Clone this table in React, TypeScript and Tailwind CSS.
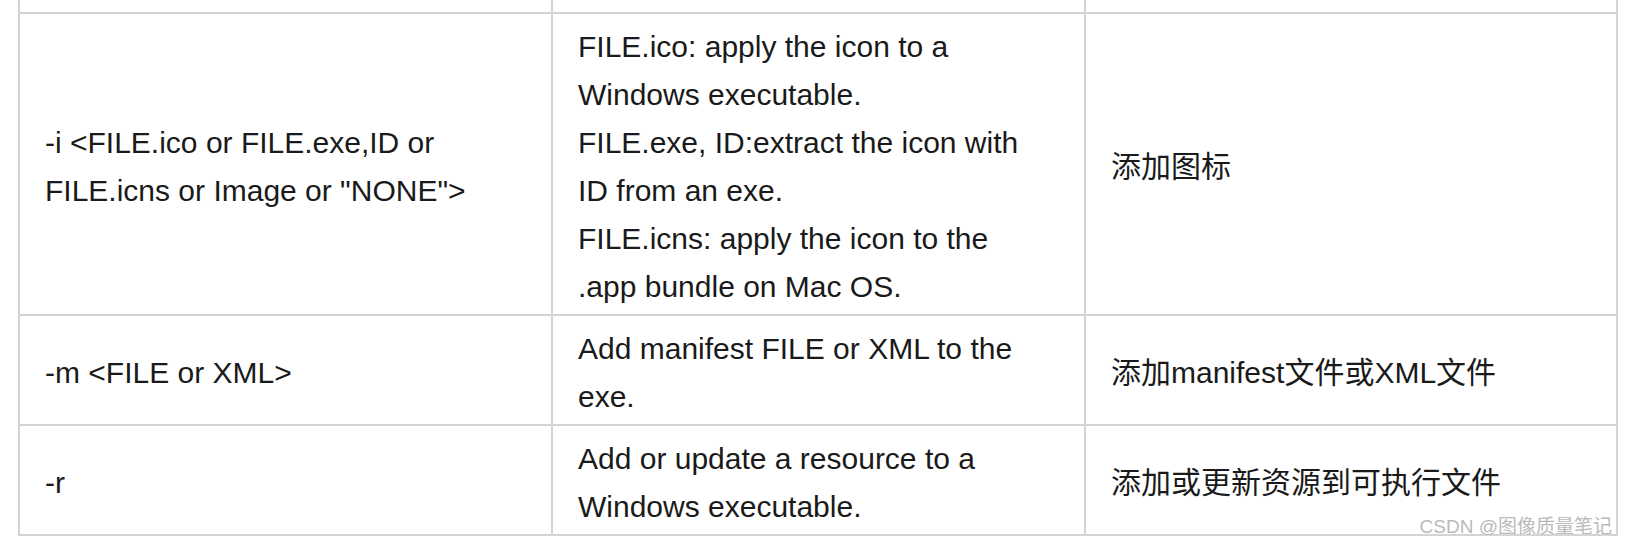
import React from 'react';

const rows = [
  {
    height: 'h-[302px]',
    option: ['-i <FILE.ico or FILE.exe,ID or FILE.icns or Image or "NONE">'],
    desc: [
      'FILE.ico: apply the icon to a Windows executable.',
      'FILE.exe, ID:extract the icon with ID from an exe.',
      'FILE.icns: apply the icon to the .app bundle on Mac OS.',
    ],
    note: '添加图标',
  },
  {
    height: 'h-[110px]',
    option: ['-m <FILE or XML>'],
    desc: ['Add manifest FILE or XML to the exe.'],
    note: '添加manifest文件或XML文件',
  },
  {
    height: 'h-[110px]',
    option: ['-r'],
    desc: ['Add or update a resource to a Windows executable.'],
    note: '添加或更新资源到可执行文件',
  },
];

const cell = 'flex flex-col justify-center pl-[25px] pr-[40px] pt-[9px] pb-[3px]';

export default function App() {
  return (
    <div
      className="relative w-[1630px] h-[548px] overflow-hidden bg-white pl-[18px] text-[30px] leading-[48px] text-[#1a1a1a]"
      style={{ fontFamily: '"Liberation Sans", "Noto Sans CJK SC", sans-serif' }}
    >
      <div className="w-[1600px] border-x-2 border-b-2 border-[#d3d3d3]">
        {/* tail of the previous row */}
        <div className="grid grid-cols-[531px_533px_1fr] h-[12px]">
          <div />
          <div className="border-l-2 border-[#d3d3d3]" />
          <div className="border-l-2 border-[#d3d3d3]" />
        </div>

        {rows.map((r, i) => (
          <div key={i} className={`grid grid-cols-[531px_533px_1fr] border-t-2 border-[#d3d3d3] ${r.height}`}>
            <div className={cell}>
              {r.option.map((t, j) => (
                <p key={j}>{t}</p>
              ))}
            </div>
            <div className={`${cell} border-l-2 border-[#d3d3d3]`}>
              {r.desc.map((t, j) => (
                <p key={j}>{t}</p>
              ))}
            </div>
            <div className={`${cell} border-l-2 border-[#d3d3d3]`}>
              <p>{r.note}</p>
            </div>
          </div>
        ))}
      </div>

      <div className="absolute right-[18px] top-[515px] text-[19px] leading-[24px] text-[#bababa] [text-shadow:0_0_2px_#fff]">
        CSDN @图像质量笔记
      </div>
    </div>
  );
}
